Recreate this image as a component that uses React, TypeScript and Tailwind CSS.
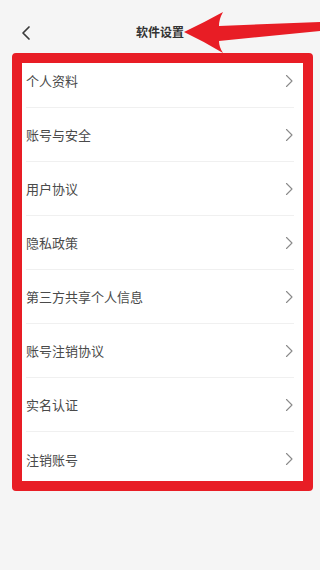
import React from "react";

const items = [
  "个人资料",
  "账号与安全",
  "用户协议",
  "隐私政策",
  "第三方共享个人信息",
  "账号注销协议",
  "实名认证",
  "注销账号",
];

function Chevron() {
  return (
    <svg width="10" height="14" viewBox="0 0 10 14" fill="none">
      <path d="M2.5 1.5 L8 7 L2.5 12.5" stroke="#8a8a8a" strokeWidth="1.1" strokeLinecap="round" strokeLinejoin="round" />
    </svg>
  );
}

export default function App() {
  return (
    <div
      className="relative w-[320px] h-[570px] bg-[#f5f5f5] overflow-hidden"
      style={{ fontFamily: '"Noto Sans CJK SC", "Noto Sans", sans-serif' }}
    >
      <header className="relative h-[54px] pt-[22px] flex justify-center">
        <button className="absolute left-[18px] top-[24px] w-[16px] h-[18px] flex items-center justify-center">
          <svg width="12" height="16" viewBox="0 0 12 16" fill="none">
            <path d="M9 2 L3 8 L9 14" stroke="#3a3a3a" strokeWidth="1.7" strokeLinecap="round" strokeLinejoin="round" />
          </svg>
        </button>
        <h1 className="text-[12px] leading-[20px] font-bold text-[#333]">软件设置</h1>
      </header>

      <div className="relative">
        <ul className="mx-[12px] bg-white">
          {items.map((t, i) => (
            <li key={t} className="h-[54px] px-[14px] flex flex-col">
              <div className="flex-1 flex items-center justify-between">
                <span className="text-[13px] text-[#4a4a4a] leading-none">{t}</span>
                <Chevron />
              </div>
              {i < items.length - 1 && <div className="h-px bg-[#f0f0f0]" />}
            </li>
          ))}
        </ul>
        <div className="absolute left-[12px] top-[-1px] w-[301px] h-[438px] border-[#e81d25] border-t-[10px] border-l-[10px] border-r-[10px] border-b-[10px] rounded-[4px] pointer-events-none" />
      </div>

      <svg className="absolute left-0 top-0 pointer-events-none" width="320" height="60" viewBox="0 0 320 60">
        <path
          d="M184 32 Q205 22 223 12 Q219 19 219 26 L320 22 L320 31 L219 41 Q219 47 223 53 Q205 42 184 32 Z"
          fill="#e81d25"
        />
      </svg>
    </div>
  );
}
